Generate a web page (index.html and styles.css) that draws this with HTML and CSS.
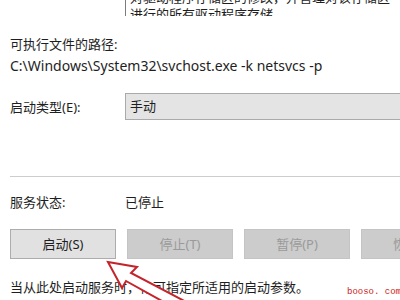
FILE: index.html
```html
<!DOCTYPE html>
<html lang="zh-CN">
<head>
<meta charset="utf-8">
<title>服务属性</title>
<link rel="stylesheet" href="styles.css">
</head>
<body>
<div class="page">
  <div class="desc">
    <div class="desc-inner">
      <p>对驱动程序存储区的修改，并管理对该存储区</p>
      <p>进行的所有驱动程序存储</p>
    </div>
  </div>
  <div class="line path-label">可执行文件的路径:</div>
  <div class="line path">C:\Windows\System32\svchost.exe -k netsvcs -p</div>
  <div class="row startup">
    <span class="label-col">启动类型(E):</span>
    <div class="combo">手动</div>
  </div>
  <div class="sep"></div>
  <div class="row status">
    <span class="label-col">服务状态:</span>
    <span>已停止</span>
  </div>
  <div class="buttons">
    <div class="btn">启动(S)</div>
    <div class="btn disabled">停止(T)</div>
    <div class="btn disabled">暂停(P)</div>
    <div class="btn disabled">恢复(R)</div>
  </div>
  <div class="line hint">当从此处启动服务时，你可指定所适用的启动参数。</div>
</div>
<svg class="arrow" width="400" height="300" viewBox="0 0 400 300">
  <polygon points="108,262 137,267 131,273 192,305 180,311 126,281 122,288" fill="#ffffff" stroke="#c4242b" stroke-width="2" stroke-linejoin="miter"/>
</svg>
<div class="watermark">booso. com</div>
</body>
</html>
```
FILE: styles.css
```css
html, body {
  margin: 0;
  padding: 0;
  background: #ffffff;
}
body {
  width: 400px;
  height: 300px;
  overflow: hidden;
  position: relative;
  font-family: "Noto Sans", "Noto Sans CJK SC", sans-serif;
  font-size: 13px;
  color: #1e1e1e;
}
.page {
  padding-left: 10px;
  display: flex;
  flex-direction: column;
}
.desc {
  margin-left: 115px;
  height: 16px;
  overflow: hidden;
  border-left: 1px solid #7c7c7c;
  padding-left: 4px;
}
.desc-inner {
  margin-top: -11px;
}
.desc-inner p {
  margin: 0;
  line-height: 17px;
  white-space: nowrap;
}
.line {
  line-height: 20px;
  white-space: nowrap;
}
.path-label {
  margin-top: 18px;
}
.path {
  margin-top: 2px;
  font-size: 14px;
}
.row {
  display: flex;
  align-items: center;
  white-space: nowrap;
}
.label-col {
  width: 115px;
  flex: none;
}
.startup {
  margin-top: 17px;
}
.combo {
  flex: 1;
  height: 25px;
  line-height: 25px;
  background: #e4e4e4;
  border: 1px solid #aaaaaa;
  border-right: none;
  padding-left: 4px;
}
.sep {
  margin-top: 56px;
  height: 1px;
  background: #cdcdcd;
}
.status {
  margin-top: 15px;
  line-height: 20px;
}
.buttons {
  margin-top: 17px;
  display: flex;
  gap: 11px;
}
.btn {
  flex: none;
  width: 104px;
  height: 28px;
  line-height: 28px;
  text-align: center;
  background: #e1e1e1;
  border: 1px solid #adadad;
  color: #1e1e1e;
}
.btn.disabled {
  background: #cccccc;
  border-color: #c4c4c4;
  color: #9a9a9a;
}
.hint {
  margin-top: 18px;
}
.arrow {
  position: absolute;
  left: 0;
  top: 0;
}
.watermark {
  position: absolute;
  right: -1px;
  top: 285px;
  font-family: "Liberation Mono", monospace;
  font-size: 9px;
  line-height: 14px;
  color: #cc1a1a;
  white-space: nowrap;
}
```
